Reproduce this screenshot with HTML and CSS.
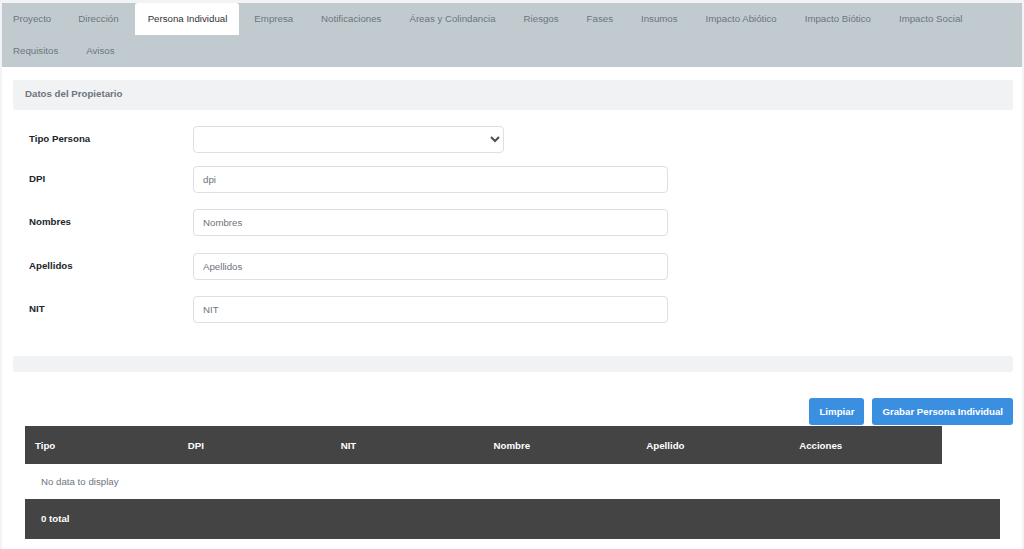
FILE: index.html
```html
<!DOCTYPE html>
<html lang="es">
<head>
<meta charset="utf-8">
<title>Persona Individual</title>
<link rel="stylesheet" href="styles.css">
</head>
<body>
<div class="page">
  <nav class="tabs">
    <a class="tab">Proyecto</a>
    <a class="tab">Dirección</a>
    <a class="tab active">Persona Individual</a>
    <a class="tab">Empresa</a>
    <a class="tab">Notificaciones</a>
    <a class="tab">Áreas y Colindancia</a>
    <a class="tab">Riesgos</a>
    <a class="tab">Fases</a>
    <a class="tab">Insumos</a>
    <a class="tab">Impacto Abiótico</a>
    <a class="tab">Impacto Biótico</a>
    <a class="tab">Impacto Social</a>
    <a class="tab">Requisitos</a>
    <a class="tab">Avisos</a>
  </nav>
  <main class="content">
    <div class="card-header">Datos del Propietario</div>
    <form class="form">
      <div class="form-row row-select">
        <label class="label">Tipo Persona</label>
        <select class="control select"><option></option></select>
      </div>
      <div class="form-row row-dpi">
        <label class="label">DPI</label>
        <input class="control input" placeholder="dpi">
      </div>
      <div class="form-row row-nombres">
        <label class="label">Nombres</label>
        <input class="control input" placeholder="Nombres">
      </div>
      <div class="form-row row-apellidos">
        <label class="label">Apellidos</label>
        <input class="control input" placeholder="Apellidos">
      </div>
      <div class="form-row row-nit">
        <label class="label">NIT</label>
        <input class="control input" placeholder="NIT">
      </div>
    </form>
    <div class="divider"></div>
    <div class="actions">
      <button class="btn">Limpiar</button>
      <button class="btn">Grabar Persona Individual</button>
    </div>
    <div class="grid">
      <div class="grid-head">
        <div class="col">Tipo</div>
        <div class="col">DPI</div>
        <div class="col">NIT</div>
        <div class="col">Nombre</div>
        <div class="col">Apellido</div>
        <div class="col">Acciones</div>
      </div>
      <div class="grid-empty">No data to display</div>
      <div class="grid-foot">0 total</div>
    </div>
  </main>
</div>
</body>
</html>
```

FILE: styles.css
```css
* { box-sizing: border-box; }
html, body { margin: 0; padding: 0; }
body {
  font-family: "Liberation Sans", Arial, sans-serif;
  font-size: 9.7px;
  color: #212529;
  background: #f2f3f5;
}
.page {
  padding: 3px 2px 0 2px;
}
.tabs {
  display: flex;
  flex-wrap: wrap;
  background: #c1cbcf;
}
.tab {
  display: block;
  height: 32px;
  line-height: 32px;
  padding: 0 12px 0 11px;
  margin-right: 4px;
  color: #6c757d;
  font-size: 9.7px;
  cursor: pointer;
}
.tab.active ~ .tab { margin-right: 5px; }
.tab.active {
  background: #ffffff;
  color: #333333;
  padding: 0 12px 0 13px;
  border-radius: 3px 3px 0 0;
}
.content {
  background: #ffffff;
  padding: 13px 9px 10px 11px;
}
.card-header {
  height: 30px;
  line-height: 28px;
  padding-left: 12px;
  background: #f1f2f4;
  color: #6c757d;
  font-weight: 600;
  font-size: 9.7px;
  border-radius: 2px;
}
.form {
  padding: 16px 0 0 16px;
}
.form-row {
  display: flex;
  align-items: center;
}
.row-select { margin-bottom: 13px; }
.row-dpi { margin-bottom: 16px; }
.row-nombres { margin-bottom: 17px; }
.row-apellidos { margin-bottom: 16px; }
.label {
  width: 164px;
  font-weight: 700;
  font-size: 9.7px;
  color: #212529;
  padding-bottom: 2px;
}
.control {
  height: 27px;
  border: 1px solid #dcdfe3;
  border-radius: 4px;
  background: #ffffff;
  font-family: inherit;
  font-size: 9.7px;
  color: #495057;
}
.select { width: 311px; padding: 0 6px; }
.input { width: 475px; padding: 0 9px; }
.input::placeholder { color: #6c757d; }
.divider {
  margin-top: 33px;
  height: 16px;
  background: #f1f2f4;
  border-radius: 3px;
}
.actions {
  display: flex;
  justify-content: flex-end;
  gap: 8px;
  margin-top: 26px;
}
.btn {
  height: 27px;
  padding: 0 10px;
  border: 0;
  border-radius: 3px;
  background: #3a8fe0;
  color: #ffffff;
  font-family: inherit;
  font-size: 9.7px;
  font-weight: 700;
}
.grid {
  margin: 1px 13px 0 12px;
}
.grid-head {
  display: flex;
  width: 917px;
  height: 38px;
  background: #444444;
  color: #ffffff;
  font-weight: 700;
  align-items: center;
}
.col {
  width: 153px;
  padding-left: 10px;
}
.grid-empty {
  height: 35px;
  line-height: 35px;
  padding-left: 16px;
  color: #6c757d;
}
.grid-foot {
  height: 40px;
  line-height: 40px;
  padding-left: 16px;
  background: #444444;
  color: #ffffff;
  font-weight: 700;
}
```
